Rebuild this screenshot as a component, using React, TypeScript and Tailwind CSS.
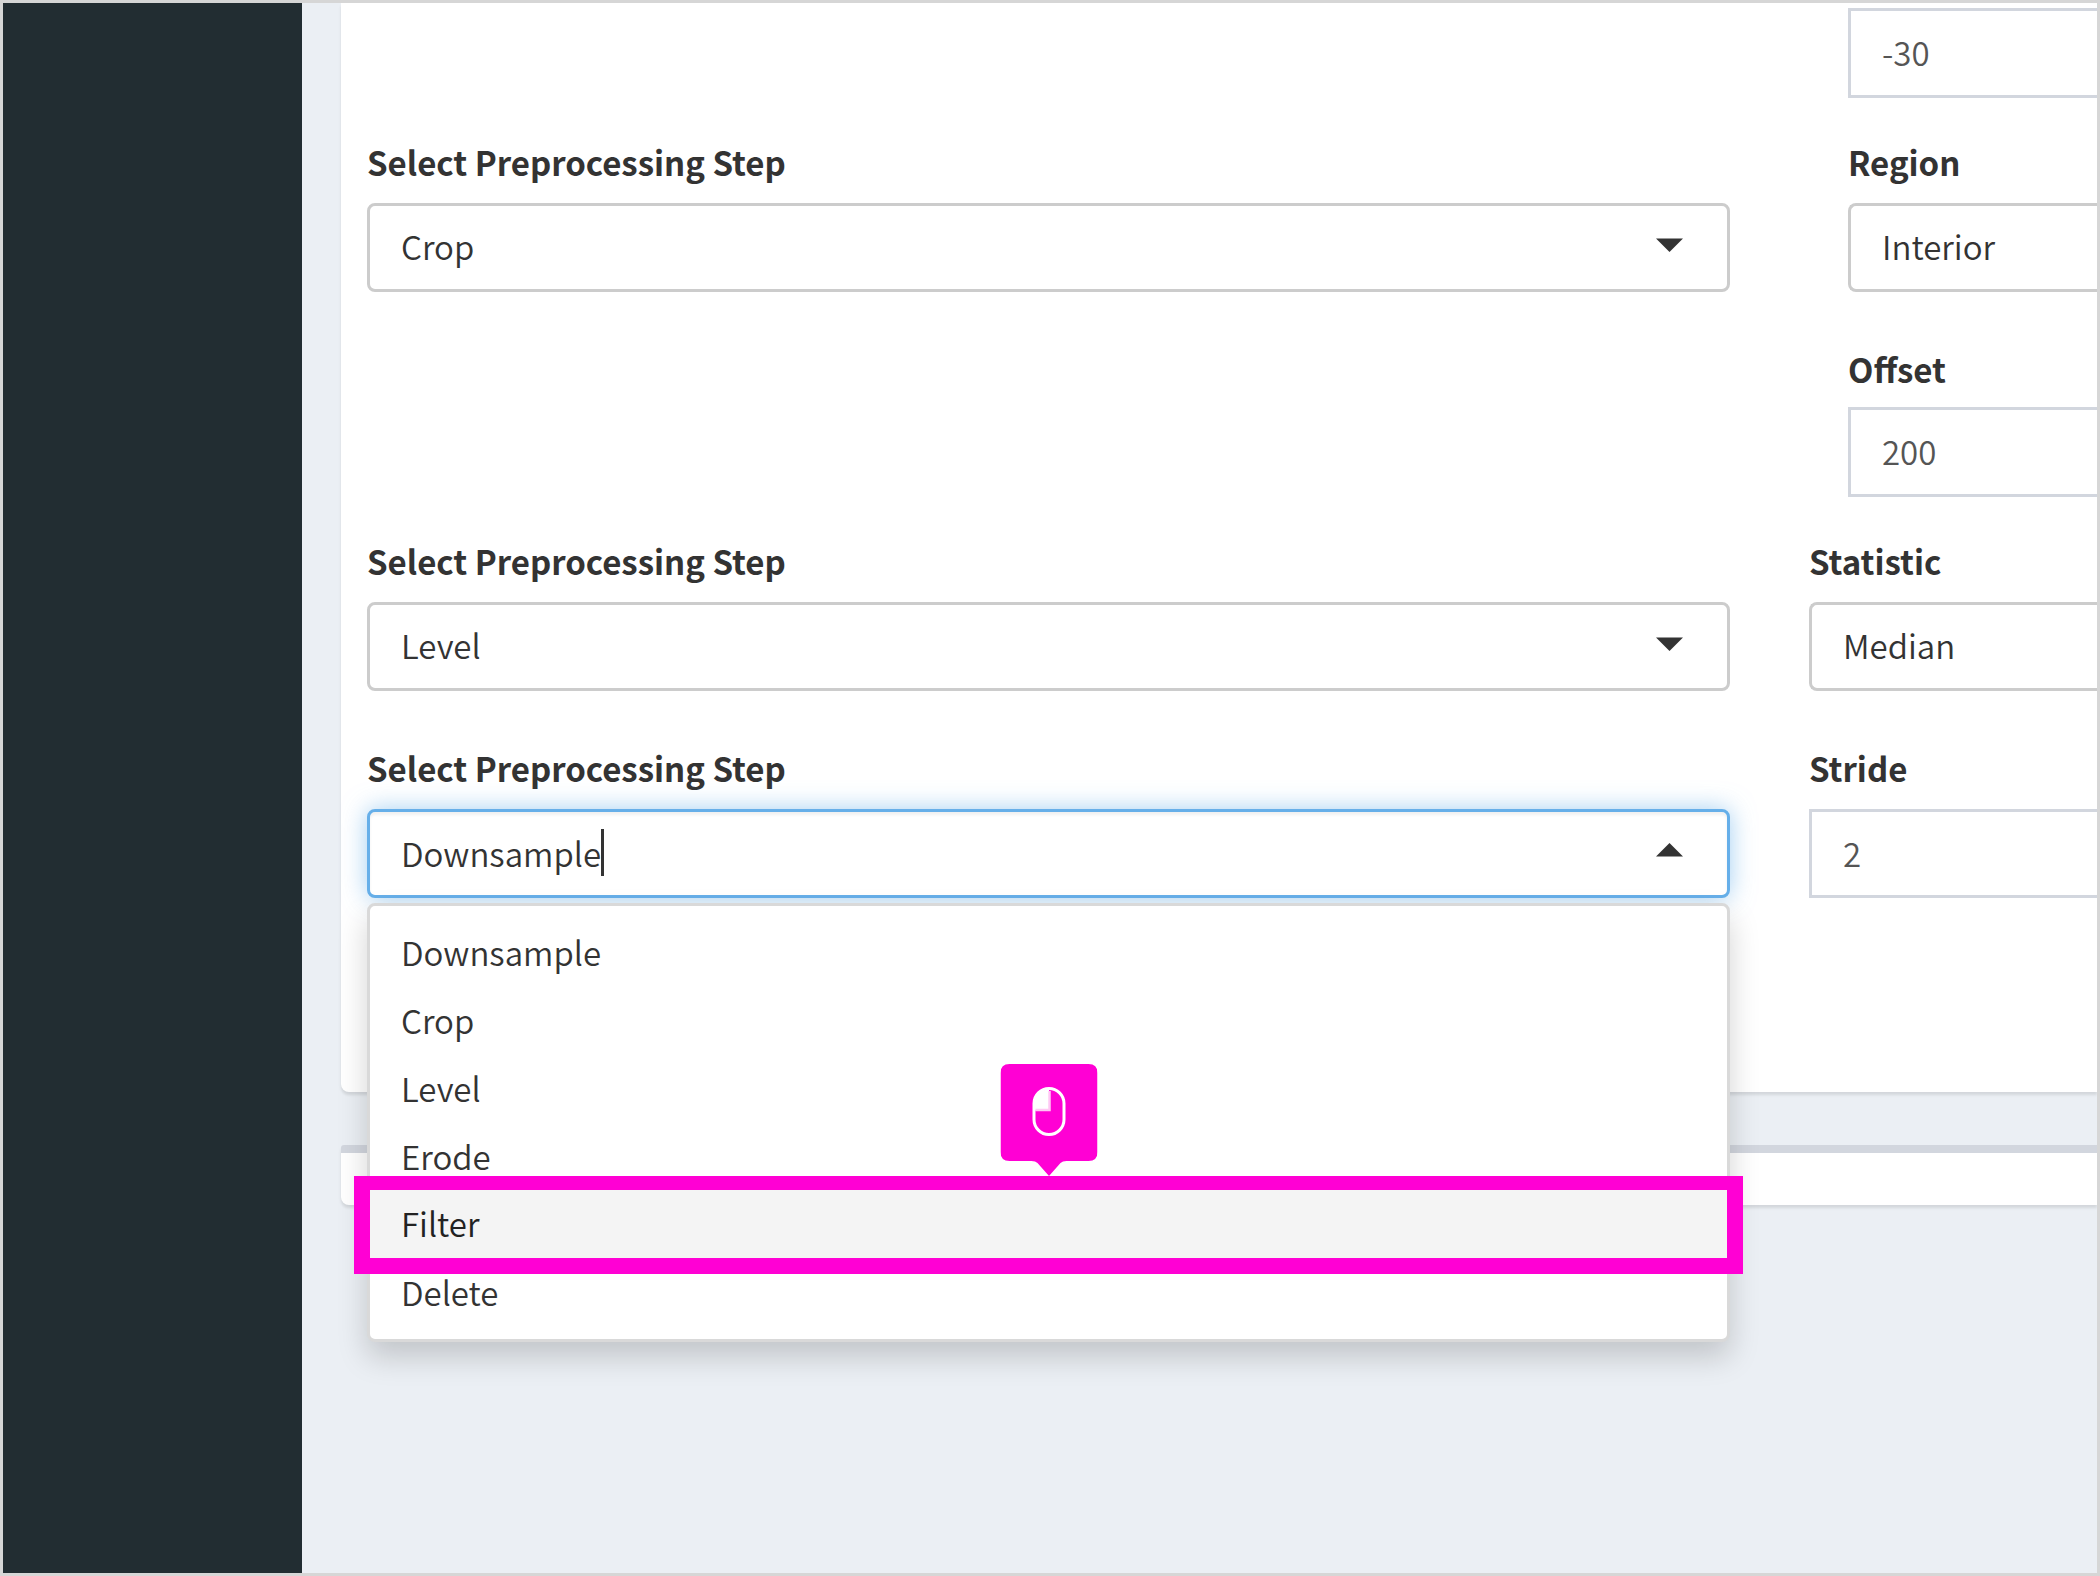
import type { ReactNode } from "react";

const STEPS = ["Downsample", "Crop", "Level", "Erode", "Filter", "Delete"];
const REGIONS = ["Interior", "Exterior"];
const STATISTICS = ["Median", "Mean"];

function Label({ id, children, tight = false }: { id: string; children: ReactNode; tight?: boolean }) {
  return (
    <label htmlFor={id} className={`block text-[33px] leading-[50px] font-bold text-[#333] ${tight ? "mb-[13px]" : "mb-4"}`}>
      {children}
    </label>
  );
}

function Caret({ up = false }: { up?: boolean }) {
  return (
    <svg
      viewBox="0 0 27 14"
      aria-hidden="true"
      className={`pointer-events-none absolute right-[47px] h-[14px] w-[27px] fill-[#333] ${up ? "top-[34px]" : "top-[35px]"}`}
    >
      <path d={up ? "M0 13.5L13.5 0L27 13.5Z" : "M0 0.5H27L13.5 14Z"} />
    </svg>
  );
}

function SelectField({ id, label, value, options, cut = false }: { id: string; label: string; value: string; options: string[]; cut?: boolean }) {
  return (
    <div className="mb-[52px]">
      <Label id={id}>{label}</Label>
      <div className="relative">
        <select
          id={id}
          defaultValue={value}
          className={`block h-[89px] w-full appearance-none border-[#ccc] bg-white pb-1 pl-[31px] text-[33px] leading-[50px] font-[350] text-[#333] outline-none ${cut ? "rounded-l-lg border-y-[3px] border-l-[3px]" : "rounded-lg border-[3px]"}`}
        >
          {options.map((o) => (
            <option key={o}>{o}</option>
          ))}
        </select>
        {!cut && <Caret />}
      </div>
    </div>
  );
}

function NumberField({ id, label, value }: { id: string; label?: string; value: string }) {
  return (
    <div className="mb-[39px]">
      {label && (
        <Label id={id} tight>
          {label}
        </Label>
      )}
      <input
        id={id}
        aria-label={label ?? "Angle"}
        defaultValue={value}
        className="block h-[90px] w-full border-y-[3px] border-l-[3px] border-[#d2d6de] bg-white pb-0.5 pl-[31px] text-[33px] leading-[50px] font-[350] text-[#555] outline-none"
      />
    </div>
  );
}

function ClickMarker() {
  return (
    <div aria-hidden="true" className="pointer-events-none absolute -inset-x-4 -top-[14px] -bottom-4 border-x-[16px] border-t-[14px] border-b-[16px] border-[#ff00d4]">
      <svg viewBox="0 0 97 113" className="absolute bottom-full left-1/2 mb-[13px] h-[113px] w-[97px] -translate-x-1/2">
        <path d="M9 0H88Q97 0 97 9V88Q97 97 88 97H66Q62 97 60 99L48.500 112L37 99Q35 97 31 97H9Q0 97 0 88V9Q0 0 9 0Z" fill="#ff00d4" />
        <path d="M48.500 25.500C39 25.500 34 32.500 34 40V46.500H48.500Z" fill="#fff" />
        <rect x="33.500" y="24.500" width="30" height="46" rx="15" fill="none" stroke="#fff" strokeWidth="3" />
        <path d="M35 46H49V27" fill="none" stroke="#ffc8f4" strokeWidth="2.500" />
      </svg>
    </div>
  );
}

function OpenStepPicker() {
  return (
    <div>
      <Label id="step-3">Select Preprocessing Step</Label>
      <div className="relative">
        <div className="flex h-[89px] items-center rounded-lg border-[3px] border-[#66afe9] bg-white pb-0.5 pl-[31px] shadow-[inset_0_3px_3px_rgba(0,0,0,0.06),0_0_24px_rgba(102,175,233,0.6)]">
          <input
            id="step-3"
            role="combobox"
            aria-expanded="true"
            aria-controls="step-3-list"
            defaultValue="Downsample"
            className="[field-sizing:content] bg-transparent text-[33px] leading-[50px] font-[350] text-[#333] outline-none"
          />
          <span aria-hidden="true" className="h-[47px] w-[3px] bg-[#333]" />
          <Caret up />
        </div>
        <ul
          id="step-3-list"
          role="listbox"
          aria-label="Preprocessing steps"
          className="absolute inset-x-0 top-full z-10 mt-[5px] rounded-lg border-[3px] border-[#d9d9d9] bg-white pt-3 pb-[13px] shadow-[0_15px_30px_rgba(0,0,0,0.175)]"
        >
          {STEPS.map((s) =>
            s === "Filter" ? (
              <li key={s} role="option" aria-selected="true" className="relative z-10 h-[68px] bg-[#f4f4f4] pl-[31px] text-[33px] leading-[66px] font-[350] text-[#222]">
                {s}
                <ClickMarker />
              </li>
            ) : (
              <li key={s} role="option" aria-selected="false" className="h-[68px] pl-[31px] text-[33px] leading-[68px] font-[350] text-[#333]">
                {s}
              </li>
            )
          )}
        </ul>
      </div>
    </div>
  );
}

function Row({ left, right, nested = false }: { left?: ReactNode; right: ReactNode; nested?: boolean }) {
  return (
    <div className="grid grid-cols-[minmax(0,1fr)_288px] gap-x-[79px]">
      <div>{left}</div>
      <div className={nested ? "pl-[39px]" : ""}>{right}</div>
    </div>
  );
}

export default function App() {
  return (
    <div className="flex min-h-screen overflow-hidden border-[3px] border-[#d6d6d6] bg-[#ebeff4] font-['Noto_Sans_CJK_SC','Noto_Sans',sans-serif]">
      <aside className="w-[299px] shrink-0 bg-[#222d32]" />
      <main className="min-w-0 flex-1 pl-[39px]">
        <section className="rounded-bl-lg bg-white pt-[5px] pb-[194px] pl-[26px] shadow-[0_3px_3px_rgba(0,0,0,0.1)]">
          <Row nested right={<NumberField id="angle" value="-30" />} />
          <Row
            nested
            left={<SelectField id="step-1" label="Select Preprocessing Step" value="Crop" options={STEPS} />}
            right={
              <>
                <SelectField id="region" label="Region" value="Interior" options={REGIONS} cut />
                <NumberField id="offset" label="Offset" value="200" />
              </>
            }
          />
          <Row
            left={<SelectField id="step-2" label="Select Preprocessing Step" value="Level" options={STEPS} />}
            right={<SelectField id="statistic" label="Statistic" value="Median" options={STATISTICS} cut />}
          />
          <Row
            left={<OpenStepPicker />}
            right={
              <div>
                <Label id="stride">Stride</Label>
                <input
                  id="stride"
                  defaultValue="2"
                  className="block h-[89px] w-full border-y-[3px] border-l-[3px] border-[#d2d6de] bg-white pb-0.5 pl-[31px] text-[33px] leading-[50px] font-[350] text-[#555] outline-none"
                />
              </div>
            }
          />
        </section>
        <section className="mt-[53px] h-[60px] rounded-tl-[3px] rounded-bl-lg border-t-8 border-[#d2d6de] bg-white shadow-[0_3px_3px_rgba(0,0,0,0.1)]" />
      </main>
    </div>
  );
}
